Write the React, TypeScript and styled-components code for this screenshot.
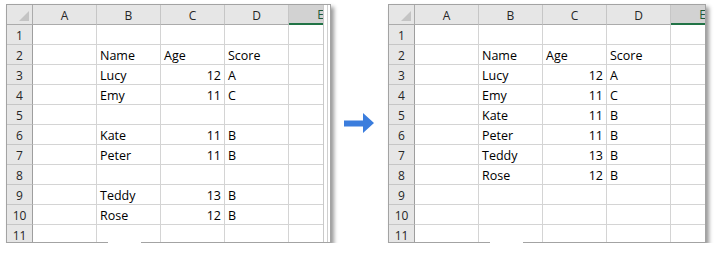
import React from 'react';
import styled, { createGlobalStyle } from 'styled-components';

const GlobalStyle = createGlobalStyle`
	html, body {
		margin: 0;
		padding: 0;
		background: #ffffff;
	}
`;

type Value = string | number | null;

const COLUMNS = ['A', 'B', 'C', 'D', 'E'];

const before: Value[][] = [
	[],
	[null, 'Name', 'Age', 'Score'],
	[null, 'Lucy', 12, 'A'],
	[null, 'Emy', 11, 'C'],
	[],
	[null, 'Kate', 11, 'B'],
	[null, 'Peter', 11, 'B'],
	[],
	[null, 'Teddy', 13, 'B'],
	[null, 'Rose', 12, 'B'],
	[],
];

const after: Value[][] = [
	[],
	[null, 'Name', 'Age', 'Score'],
	[null, 'Lucy', 12, 'A'],
	[null, 'Emy', 11, 'C'],
	[null, 'Kate', 11, 'B'],
	[null, 'Peter', 11, 'B'],
	[null, 'Teddy', 13, 'B'],
	[null, 'Rose', 12, 'B'],
	[],
	[],
	[],
];

const Page = styled.div`
	display: flex;
	align-items: center;
	padding: 4px 0 0 6px;
	font-family: 'Open Sans', 'Noto Sans', sans-serif;
`;

const SheetFrame = styled.div`
	position: relative;
	display: flex;
	border: 1px solid #a3a3a3;
	background: #ffffff;
	box-shadow: 3px 3px 4px rgba(0, 0, 0, 0.4);
`;

const Viewport = styled.div`
	width: 316px;
	height: 237px;
	overflow: hidden;
`;

const Grid = styled.div`
	display: grid;
	grid-template-columns: 26px repeat(5, 64px);
	grid-auto-rows: 20px;
	width: max-content;
`;

const Corner = styled.div`
	position: relative;
	background: #e6e6e6;
	border-right: 1px solid #ababab;
	border-bottom: 1px solid #ababab;

	&::after {
		content: '';
		position: absolute;
		right: 3px;
		bottom: 3px;
		width: 0;
		height: 0;
		border-style: solid;
		border-width: 0 0 10px 10px;
		border-color: transparent transparent #c4c4c4 transparent;
	}
`;

const ColHeader = styled.div<{ $selected?: boolean }>`
	box-sizing: border-box;
	display: flex;
	align-items: center;
	justify-content: center;
	padding-top: 1px;
	background: ${(p) => (p.$selected ? '#d2d2d2' : '#e6e6e6')};
	border-right: 1px solid #c6c6c6;
	border-bottom: ${(p) => (p.$selected ? '2px solid #217346' : '1px solid #ababab')};
	color: ${(p) => (p.$selected ? '#1e5a3a' : '#262626')};
	font-size: 12px;
`;

const RowHeader = styled.div`
	box-sizing: border-box;
	display: flex;
	align-items: center;
	justify-content: center;
	padding-top: 2px;
	background: #e6e6e6;
	border-right: 1px solid #9e9e9e;
	border-bottom: 1px solid #c6c6c6;
	color: #262626;
	font-size: 12px;
`;

const Cell = styled.div<{ $numeric?: boolean }>`
	box-sizing: border-box;
	padding: 1px 3px 0 3px;
	border-right: 1px solid #d4d4d4;
	border-bottom: 1px solid #d4d4d4;
	font-size: 12.5px;
	line-height: 19px;
	color: #000000;
	text-align: ${(p) => (p.$numeric ? 'right' : 'left')};
	white-space: nowrap;
	overflow: hidden;
`;

const ScrollStrip = styled.div`
	width: 6px;
	border-left: 1px solid #c9c9c9;
	background: #ffffff;
	box-shadow: inset -2px 0 0 #ffffff, inset -3px 0 0 #cfcfcf;
`;

const TabGap = styled.div`
	position: absolute;
	left: 101px;
	bottom: -2px;
	width: 33px;
	height: 3px;
	background: #ffffff;
`;

const Arrow = styled.svg`
	flex: none;
	margin: 0 14px 0 13px;
`;

type SheetProps = {
	rows: Value[][];
	scrollbar?: boolean;
};

const Sheet: React.FC<SheetProps> = ({ rows, scrollbar }) => (
	<SheetFrame>
		<Viewport>
			<Grid>
				<Corner />
				{COLUMNS.map((c) => (
					<ColHeader key={c} $selected={c === 'E'}>
						{c}
					</ColHeader>
				))}
				{rows.map((row, r) => (
					<React.Fragment key={r}>
						<RowHeader>{r + 1}</RowHeader>
						{COLUMNS.map((c, i) => {
							const v = row[i] ?? null;
							return (
								<Cell key={c} $numeric={typeof v === 'number'}>
									{v}
								</Cell>
							);
						})}
					</React.Fragment>
				))}
			</Grid>
		</Viewport>
		{scrollbar && <ScrollStrip />}
		<TabGap />
	</SheetFrame>
);

export default function App() {
	return (
		<>
			<GlobalStyle />
			<Page>
				<Sheet rows={before} scrollbar />
				<Arrow width="30" height="30" viewBox="0 0 30 30">
					<path d="M0 11.5 H19 V4 L30 14 L19 24 V17.5 H0 Z" fill="#3b7ddd" />
				</Arrow>
				<Sheet rows={after} />
			</Page>
		</>
	);
}
